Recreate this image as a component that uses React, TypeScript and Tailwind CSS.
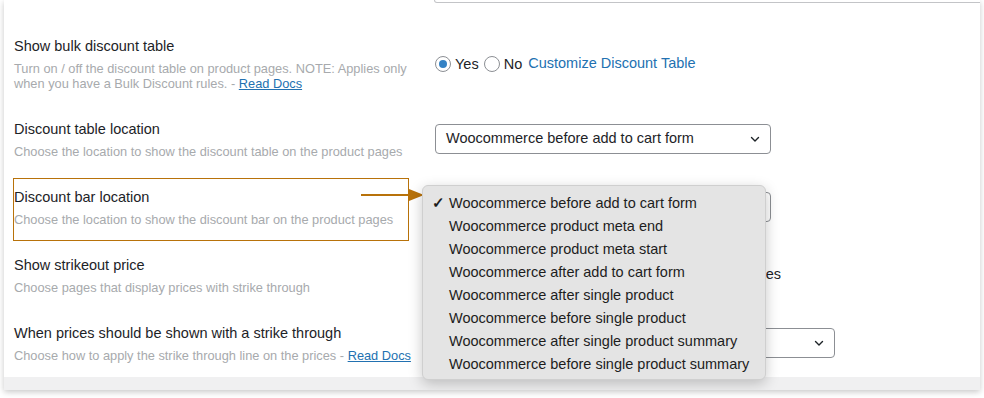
import React from 'react';

const locations = [
  'Woocommerce before add to cart form',
  'Woocommerce product meta end',
  'Woocommerce product meta start',
  'Woocommerce after add to cart form',
  'Woocommerce after single product',
  'Woocommerce before single product',
  'Woocommerce after single product summary',
  'Woocommerce before single product summary',
];

function Chevron() {
  return (
    <svg width="12" height="12" viewBox="0 0 12 12" fill="none" className="shrink-0">
      <path d="M2.5 4.5 6 8l3.5-3.5" stroke="#1d2327" strokeWidth="1.4" strokeLinecap="round" strokeLinejoin="round" />
    </svg>
  );
}

function Select({ value, width }: { value: string; width: string }) {
  return (
    <div className={`${width} h-[30px] border border-[#8c8f94] rounded-[4px] bg-white flex items-center justify-between pl-[10px] pr-[9px] text-[14.5px] text-[#1d2327]`}>
      <span>{value}</span>
      <Chevron />
    </div>
  );
}

function Radio({ checked }: { checked?: boolean }) {
  return (
    <span className="w-4 h-4 rounded-full border border-[#8c8f94] bg-white flex items-center justify-center">
      {checked && <span className="w-2 h-2 rounded-full bg-[#3582c4]" />}
    </span>
  );
}

function Row({
  title,
  children,
  right,
}: {
  title: string;
  children: React.ReactNode;
  right?: React.ReactNode;
}) {
  return (
    <div className="flex items-center">
      <div className="w-[431px] pl-[10px]">
        <div className="text-[14.5px] leading-[20px] text-[#1d2327]">{title}</div>
        <div className="mt-[5px] text-[12.8px] leading-[15px] text-[#a7aaad]">{children}</div>
      </div>
      <div className="flex-1">{right}</div>
    </div>
  );
}

export default function App() {
  return (
    <div className="w-[984px] h-[398px] bg-white font-['Liberation_Sans',Arial,sans-serif] overflow-hidden">
      <div className="relative ml-[4px] w-[976px] h-[390px] bg-white overflow-hidden shadow-[0_2px_6px_rgba(0,0,0,0.22)]">
        {/* bottom of the field above */}
        <div className="flex">
          <div className="w-[430px]" />
          <div className="flex-1 h-[3px] border-x border-b border-[#c3c4c7] rounded-b-[4px] -mr-2" />
        </div>

        <div className="mt-[33px] flex flex-col gap-[28px] pb-[14px]">
          <Row
            title="Show bulk discount table"
            right={
              <div className="flex items-center gap-[4px] text-[14.5px] text-[#1d2327]">
                <Radio checked />
                <span className="mt-[3px]">Yes</span>
                <span className="ml-[1px]"><Radio /></span>
                <span className="mt-[3px]">No</span>
                <a className="ml-[2px] text-[#2271b1]">Customize Discount Table</a>
              </div>
            }
          >
            Turn on / off the discount table on product pages. NOTE: Applies only
            <br />
            when you have a Bulk Discount rules. - <a className="text-[#2271b1] underline">Read Docs</a>
          </Row>

          <Row
            title="Discount table location"
            right={<Select value="Woocommerce before add to cart form" width="w-[336px]" />}
          >
            Choose the location to show the discount table on the product pages
          </Row>

          <div className="relative">
            <Row
              title="Discount bar location"
              right={<Select value="Woocommerce before add to cart form" width="w-[336px]" />}
            >
              Choose the location to show the discount bar on the product pages
            </Row>
            {/* highlight annotation */}
            <div className="absolute left-[9px] top-[-9px] w-[396px] h-[63px] border border-[#b8720a]" />
            <div className="absolute left-[357px] top-[2px] flex items-center">
              <div className="w-[48px] h-[2px] bg-[#b8720a]" />
              <svg width="15" height="12" viewBox="0 0 15 12">
                <path d="M0 0 15 6 0 12Z" fill="#b8720a" />
              </svg>
            </div>
          </div>

          <Row
            title="Show strikeout price"
            right={
              <div className="w-[346px] text-right text-[14.5px] text-[#1d2327] whitespace-nowrap overflow-hidden">
                Shop pages &nbsp; Product pages
              </div>
            }
          >
            Choose pages that display prices with strike through
          </Row>

          <Row
            title="When prices should be shown with a strike through"
            right={<Select value="Show on both regular and sale price" width="w-[400px]" />}
          >
            Choose how to apply the strike through line on the prices -{' '}
            <a className="text-[#2271b1] underline">Read Docs</a>
          </Row>
        </div>

        <div className="h-[13px] bg-[#f0f0f1]" />

        {/* open native select menu */}
        <div className="absolute left-[418px] top-[185px] w-[344px] h-[195px] rounded-[6px] bg-[#e4e4e4] border border-[#cfcfcf] shadow-[0_4px_14px_rgba(0,0,0,0.22)] pt-[6px] pb-[4px]">
          {locations.map((loc, i) => (
            <div key={loc} className="h-[23px] flex items-center text-[14.5px] text-[#1d1d1d]">
              <span className="w-[26px] pl-[9px] text-[15px] font-bold">{i === 0 ? '✓' : ''}</span>
              <span>{loc}</span>
            </div>
          ))}
        </div>
      </div>
    </div>
  );
}
